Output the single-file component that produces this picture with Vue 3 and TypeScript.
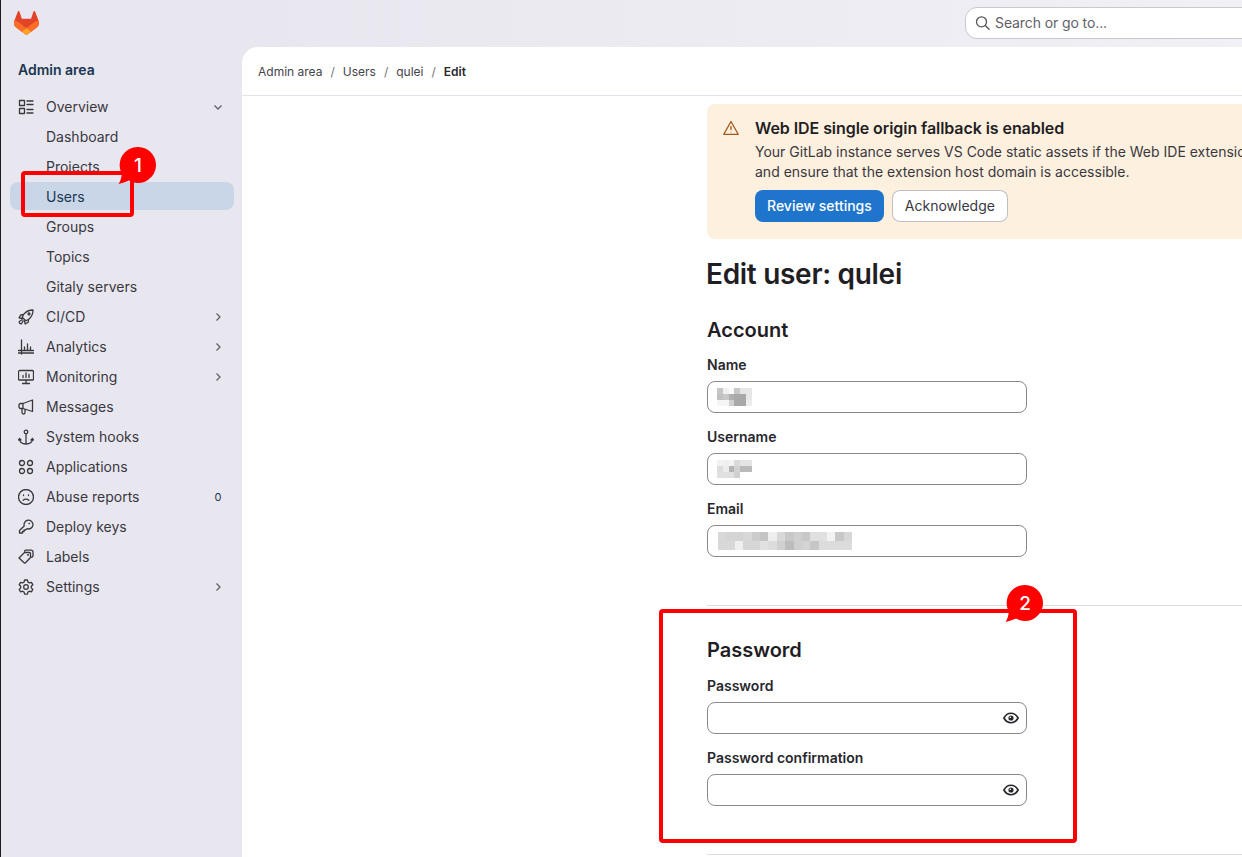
<script setup lang="ts">
interface NavItem { label: string; icon?: string; chevron?: 'down' | 'right'; badge?: string; active?: boolean }

const icons: Record<string, string> = {
  overview: 'M1.500 1.500h5v5h-5zM1.500 9.500h5v5h-5zM9 2h6M9 5.500h6M9 10.500h6M9 14h6',
  rocket: 'M5.800 5.200C8 2.500 11 1 15 1 15 5 13.500 8 10.800 10.200L7.800 11.800 4.200 8.200ZM5.500 5.500 2.800 5.800 1 8.800 4 9.500M10.500 10.500 10.200 13.200 7.200 15 6.500 12M4.200 10.800 1.200 12.500a2 2 0 0 0 2.300 2.300L5.200 11.800M11 4a1 1 0 1 0 .01 0',
  analytics: 'M3.500 1v14M.5 11.500h15M.5 14h15M6.500 8v3.500M9.500 5v6.500M12.500 8v3.500',
  monitoring: 'M1.800 1.500h12.400a1.300 1.300 0 0 1 1.300 1.300v7.400a.8.8 0 0 1-.8.8H1.300a.8.8 0 0 1-.8-.8V2.800a1.300 1.300 0 0 1 1.300-1.300ZM4.500 14.500h7M8 11v3.500M5 8.500V6.500M8 8.500V4M11 8.500V5.500',
  messages: 'M14.500 1v11.500L5 9.500H2.500A1.500 1.500 0 0 1 1 8V6A1.500 1.500 0 0 1 2.500 4.500H5ZM5 4.500v5M4 9.500v4a1.500 1.500 0 0 0 3 0v-3',
  hooks: 'M8 5v10M9.800 3a1.800 1.800 0 1 1-3.600 0 1.800 1.800 0 1 1 3.600 0ZM1.500 9.500C1 13 4 15 8 15s7-2 6.500-5.500M.5 11l1-1.500L3 11M13 11l1.500-1.500 1 1.500',
  applications: 'M6.500 4a2.500 2.500 0 1 1-5 0 2.500 2.500 0 1 1 5 0ZM14.500 4a2.500 2.500 0 1 1-5 0 2.500 2.500 0 1 1 5 0ZM6.500 12a2.500 2.500 0 1 1-5 0 2.500 2.500 0 1 1 5 0ZM14.500 12a2.500 2.500 0 1 1-5 0 2.500 2.500 0 1 1 5 0Z',
  abuse: 'M15.500 8a7.500 7.500 0 1 1-15 0 7.500 7.500 0 1 1 15 0ZM5.200 11.300c1.500-1.500 4.100-1.500 5.600 0M5.500 6v.5M10.500 6v.5',
  keys: 'M15 5.500a4.500 4.500 0 0 1-6 4.200L7.500 11H6v1.500H4.500V14H1.500v-2.500L6.200 7A4.500 4.500 0 1 1 15 5.500ZM11 4.500h.5',
  labels: 'M1 9 6.500 3.500h5a1 1 0 0 1 1 1V8.500L7.500 13.800a1 1 0 0 1-1.400 0ZM6.500 2 7.500 1.200h5.800a1.700 1.700 0 0 1 1.700 1.700V7L13.800 8.300M9.800 5.700h.5v.5h-.5Z',
  settings: 'M6.600 1h2.800l.5 2 1.500.9 2-.6 1.400 2.400-1.500 1.500v1.700l1.500 1.500-1.400 2.400-2-.6-1.500.9-.5 2H6.600l-.5-2-1.500-.9-2 .6L1.200 10.400l1.500-1.500V7.200L1.200 5.700 2.600 3.300l2 .6 1.500-.9ZM10.300 8a2.300 2.300 0 1 1-4.600 0 2.300 2.300 0 1 1 4.600 0Z',
}

const nav: NavItem[] = [
  { label: 'Overview', icon: 'overview', chevron: 'down' },
  { label: 'Dashboard' },
  { label: 'Projects' },
  { label: 'Users', active: true },
  { label: 'Groups' },
  { label: 'Topics' },
  { label: 'Gitaly servers' },
  { label: 'CI/CD', icon: 'rocket', chevron: 'right' },
  { label: 'Analytics', icon: 'analytics', chevron: 'right' },
  { label: 'Monitoring', icon: 'monitoring', chevron: 'right' },
  { label: 'Messages', icon: 'messages' },
  { label: 'System hooks', icon: 'hooks' },
  { label: 'Applications', icon: 'applications' },
  { label: 'Abuse reports', icon: 'abuse', badge: '0' },
  { label: 'Deploy keys', icon: 'keys' },
  { label: 'Labels', icon: 'labels' },
  { label: 'Settings', icon: 'settings', chevron: 'right' },
]

const crumbs = ['Admin area', 'Users', 'qulei']

const nameCells = ['#c6c6c6','#f0f0f0','#fafafa','#c8c8c8','#e6e6e6','#e6e6e6','#c0c0c0','#c8c8c8','#b0b0b0','#a8a8a8','#a8a8a8','#e8e8e8','#f5f5f5','#f5f5f5','#d0d0d0','#a8a8a8','#a8a8a8','#ececec']
const userCells = ['#f2f2f2','#efefef','#f4f4f4','#dadada','#e4e4e4','#e4e4e4','#dcdcdc','#ececec','#b4b4b4','#d2d2d2','#bababa','#bababa','#e0e0e0','#e0e0e0','#e0e0e0','#cfcfcf','#ffffff','#ffffff']
const mailCells = ['#d8d8d8','#d4d4d4','#d4d4d4','#d8d8d8','#cccccc','#c4c4c4','#eeeeee','#d8d8d8','#c8c8c8','#d0d0d0','#c8c8c8','#e0e0e0','#e0e0e0','#f2f2f2','#c8c8c8','#d8d8d8',
  '#d8d8d8','#d8d8d8','#efefef','#d6d6d6','#d6d6d6','#e0e0e0','#dcdcdc','#d0d0d0','#bcbcbc','#cfcfcf','#d4d4d4','#c6c6c6','#dcdcdc','#dcdcdc','#dcdcdc','#dcdcdc']
</script>

<template>
  <div class="app">
    <aside class="sidebar">
      <svg class="logo" viewBox="0 0 25 24" width="25" height="24">
        <path fill="#E24329" d="m24.507 9.5-.034-.09L21.082.562a.896.896 0 0 0-1.694.091l-2.29 7.01H7.825L5.535.653a.898.898 0 0 0-1.694-.09L.451 9.411.416 9.5a6.297 6.297 0 0 0 2.09 7.278l.012.01.03.022 5.16 3.867 2.56 1.935 1.554 1.176a1.051 1.051 0 0 0 1.268 0l1.555-1.176 2.56-1.935 5.197-3.89.014-.01A6.297 6.297 0 0 0 24.507 9.5Z" />
        <path fill="#FC6D26" d="m24.507 9.5-.034-.09a11.44 11.44 0 0 0-4.56 2.051l-7.447 5.632 4.742 3.584 5.197-3.89.014-.01A6.297 6.297 0 0 0 24.507 9.5Z" />
        <path fill="#FCA326" d="m7.707 20.677 2.56 1.935 1.555 1.176a1.051 1.051 0 0 0 1.268 0l1.555-1.176 2.56-1.935-4.743-3.584-4.755 3.584Z" />
        <path fill="#FC6D26" d="M5.01 11.461a11.43 11.43 0 0 0-4.56-2.05L.416 9.5a6.297 6.297 0 0 0 2.09 7.278l.012.01.03.022 5.16 3.867 4.745-3.584-7.444-5.632Z" />
      </svg>
      <div class="area">Admin area</div>
      <nav class="nav">
        <div v-for="item in nav" :key="item.label" class="nav-item" :class="{ active: item.active }">
          <svg v-if="item.icon" class="nav-icon" viewBox="0 0 16 16" width="16" height="16">
            <path :d="icons[item.icon]" />
          </svg>
          <span class="nav-label">{{ item.label }}</span>
          <svg v-if="item.chevron === 'down'" class="chev" viewBox="0 0 16 16" width="16" height="16"><path d="M4.500 6.500 8 10l3.500-3.500" /></svg>
          <svg v-if="item.chevron === 'right'" class="chev" viewBox="0 0 16 16" width="16" height="16"><path d="M6.500 4.500 10 8l-3.500 3.500" /></svg>
          <span v-if="item.badge" class="nav-badge">{{ item.badge }}</span>
        </div>
      </nav>
    </aside>

    <div class="right">
      <header class="topbar">
        <div class="search">
          <svg viewBox="0 0 16 16" width="16" height="16"><path d="M11.500 6.800a5 5 0 1 1-10 0 5 5 0 1 1 10 0ZM10.300 10.500l4.200 4.200" /></svg>
          <span>Search or go to...</span>
        </div>
      </header>

      <main class="panel">
        <div class="crumbs">
          <template v-for="c in crumbs" :key="c">
            <span>{{ c }}</span><span class="sep">/</span>
          </template>
          <strong>Edit</strong>
        </div>

        <div class="content">
          <section class="alert">
            <svg class="alert-icon" viewBox="0 0 16 16" width="16" height="16">
              <path d="M8 1.500 15.200 14.300H.8ZM8 6v4M8 11.800v.5" />
            </svg>
            <div class="alert-body">
              <h2>Web IDE single origin fallback is enabled</h2>
              <p>Your GitLab instance serves VS Code static assets if the Web IDE extension host domain is not reachable. Review your settings</p>
              <p>and ensure that the extension host domain is accessible.</p>
              <div class="alert-actions">
                <button class="btn primary">Review settings</button>
                <button class="btn">Acknowledge</button>
              </div>
            </div>
          </section>

          <h1>Edit user: qulei</h1>

          <h3 class="section-title first">Account</h3>
          <div class="field">
            <label>Name</label>
            <div class="input">
              <div class="blur six name"><i v-for="(c, i) in nameCells" :key="i" :style="{ background: c }"></i></div>
            </div>
          </div>
          <div class="field">
            <label>Username</label>
            <div class="input">
              <div class="blur six name"><i v-for="(c, i) in userCells" :key="i" :style="{ background: c }"></i></div>
            </div>
          </div>
          <div class="field">
            <label>Email</label>
            <div class="input">
              <div class="blur mail"><i v-for="(c, i) in mailCells" :key="i" :style="{ background: c }"></i></div>
            </div>
          </div>

          <hr class="rule top" />

          <h3 class="section-title">Password</h3>
          <div class="field">
            <label>Password</label>
            <div class="input eye-input">
              <svg viewBox="0 0 16 16" width="16" height="16"><path class="eye" d="M.9 8C2.500 5 5 3.300 8 3.300S13.500 5 15.100 8C13.500 11 11 12.700 8 12.700S2.500 11 .9 8Z" /><circle class="eye-dot" cx="8" cy="8" r="2.600" /><circle class="eye-glint" cx="7.300" cy="7.300" r=".8" /></svg>
            </div>
          </div>
          <div class="field">
            <label>Password confirmation</label>
            <div class="input eye-input">
              <svg viewBox="0 0 16 16" width="16" height="16"><path class="eye" d="M.9 8C2.500 5 5 3.300 8 3.300S13.500 5 15.100 8C13.500 11 11 12.700 8 12.700S2.500 11 .9 8Z" /><circle class="eye-dot" cx="8" cy="8" r="2.600" /><circle class="eye-glint" cx="7.300" cy="7.300" r=".8" /></svg>
            </div>
          </div>

          <hr class="rule bottom" />
        </div>
      </main>
    </div>

    <div class="mark box-one"></div>
    <div class="mark box-two"></div>
    <svg class="callout one" viewBox="0 0 40 42" width="40" height="42">
      <path d="M20 2a18 18 0 1 1-9 33.600C8 37 4 38.500 .5 39 2.500 36 3.500 33 3.800 28.500A18 18 0 0 1 20 2Z" />
      <text x="20" y="26.500">1</text>
    </svg>
    <svg class="callout two" viewBox="0 0 40 42" width="40" height="42">
      <path d="M20 2a18 18 0 1 1-9 33.600C8 37 4 38.500 .5 39 2.500 36 3.500 33 3.800 28.500A18 18 0 0 1 20 2Z" />
      <text x="20" y="26.500">2</text>
    </svg>
  </div>
</template>

<style>
html, body { margin: 0; background: #fff; }
</style>

<style scoped>
.app {
  position: relative;
  display: flex;
  width: 1242px;
  height: 857px;
  overflow: hidden;
  background: #e8e7ef;
  font-family: Inter, "Liberation Sans", sans-serif;
  font-size: 14px;
  color: #3a383f;
  border-left: 1px solid #1d1d24;
  box-sizing: border-box;
}
.sidebar { width: 241px; flex: none; padding: 11px 8px 0 9px; box-sizing: border-box; }
.logo { display: block; margin-left: 4px; }
.area { margin: 25px 0 0 8px; font-weight: 600; line-height: 20px; color: #1a3652; }
.nav { margin-top: 12px; }
.nav-item {
  display: flex;
  align-items: center;
  height: 28px;
  margin-bottom: 2px;
  padding: 2px 8px 0 36px;
  box-sizing: border-box;
  position: relative;
  border-radius: 8px;
}
.nav-item.active { background: #c9d6e8; color: #1a3652; }
.nav-label { flex: 1; line-height: 20px; }
.nav-icon { position: absolute; left: 8px; top: 7px; fill: none; stroke: #3a383f; stroke-width: 1.300; stroke-linejoin: round; stroke-linecap: round; }
.chev { fill: none; stroke: #626168; stroke-width: 1.300; }
.nav-badge { width: 16px; text-align: center; font-size: 11px; font-weight: 400; color: #1a3652; }

.right { flex: 1; min-width: 0; display: flex; flex-direction: column; }
.topbar {
  height: 47px;
  flex: none;
  display: flex;
  align-items: flex-start;
  padding: 7px 0 0 723px;
  box-sizing: border-box;
  background: linear-gradient(90deg, #e8e7ef, #f0f0f5);
}
.search {
  flex: none;
  width: 400px;
  height: 32px;
  display: flex;
  align-items: center;
  gap: 4px;
  padding: 0 0 1px 9px;
  box-sizing: border-box;
  background: #fff;
  border: 1px solid #c9c8cf;
  border-radius: 12px;
  color: #626168;
  letter-spacing: -0.1px;
}
.search svg { fill: none; stroke: #55545b; stroke-width: 1.300; }
.panel { flex: 1; background: #fff; border-top-left-radius: 16px; min-height: 0; }
.crumbs {
  height: 48px;
  display: flex;
  align-items: center;
  gap: 8px;
  padding-left: 16px;
  border-bottom: 1px solid #e4e4ee;
  font-size: 12px;
  color: #45434a;
  box-sizing: content-box;
}
.crumbs strong { font-weight: 600; color: #28272d; }
.sep { color: #737278; }
.content { margin-left: 465px; width: 900px; padding-top: 8px; }
.alert {
  display: flex;
  gap: 16px;
  padding: 16px;
  height: 135px;
  box-sizing: border-box;
  background: #fdf0de;
  border-radius: 8px;
}
.alert-icon { flex: none; fill: none; stroke: #a4571b; stroke-width: 1.300; stroke-linejoin: round; }
.alert-body { min-width: 0; }
.alert h2 { margin: 0 0 6px; font-size: 16px; line-height: 16px; font-weight: 600; letter-spacing: -0.07px; color: #1f1e24; white-space: nowrap; }
.alert p { margin: 0; line-height: 20px; white-space: nowrap; color: #3a383f; }
.alert-actions { display: flex; gap: 8px; margin-top: 8px; }
.btn {
  height: 32px;
  padding: 0 13px 1px;
  font: inherit;
  background: #fff;
  color: #3a383f;
  border: 0;
  box-shadow: inset 0 0 0 1px #bfbfc3;
  border-radius: 8px;
}
.btn.primary { padding: 0 12px 1px; background: #1f75cb; box-shadow: none; color: #fff; font-weight: 500; }
h1 { margin: 17px 0 0 -1px; font-size: 28px; line-height: 36px; font-weight: 600; letter-spacing: -0.3px; color: #1f1e24; }
.section-title { margin: 0 0 12px; font-size: 20px; line-height: 28px; font-weight: 600; color: #1f1e24; }
.section-title.first { margin: 24px 0 11px; }
.field { margin-bottom: 14px; }
.field label { display: block; margin-bottom: 6px; line-height: 20px; font-weight: 600; color: #28272d; }
.input {
  position: relative;
  display: flex;
  align-items: center;
  width: 320px;
  height: 32px;
  box-sizing: border-box;
  border: 1px solid #89888d;
  border-radius: 8px;
  background: #fff;
}
.blur { display: grid; grid-template-rows: repeat(2, 9px); margin-left: 9px; }
.blur i { display: block; }
.six { grid-template-rows: repeat(3, 6px); grid-template-columns: repeat(6, 5.830px); }
.mail { grid-template-columns: repeat(16, 8.400px); margin-left: 10px; }
.eye-input { justify-content: flex-end; padding-right: 7px; }
.eye { fill: none; stroke: #28272d; stroke-width: 1.600; }
.eye-dot { fill: #28272d; }
.eye-glint { fill: #fff; }
.rule { margin: 0; border: 0; height: 1px; background: #dcdcde; }
.rule.top { margin: 48px 0 30px; }
.rule.bottom { margin-top: 48px; }

.mark { position: absolute; border: 4px solid #f00; border-radius: 4px; box-sizing: border-box; }
.box-one { left: 20px; top: 171px; width: 113px; height: 46px; }
.box-two { left: 658px; top: 609px; width: 418px; height: 234px; }
.callout { position: absolute; }
.callout path { fill: #f00; }
.callout text { fill: #fff; font-size: 19px; font-weight: 500; text-anchor: middle; font-family: Inter, sans-serif; }
.callout.one { left: 117px; top: 145px; }
.callout.two { left: 1004px; top: 583px; }
</style>
